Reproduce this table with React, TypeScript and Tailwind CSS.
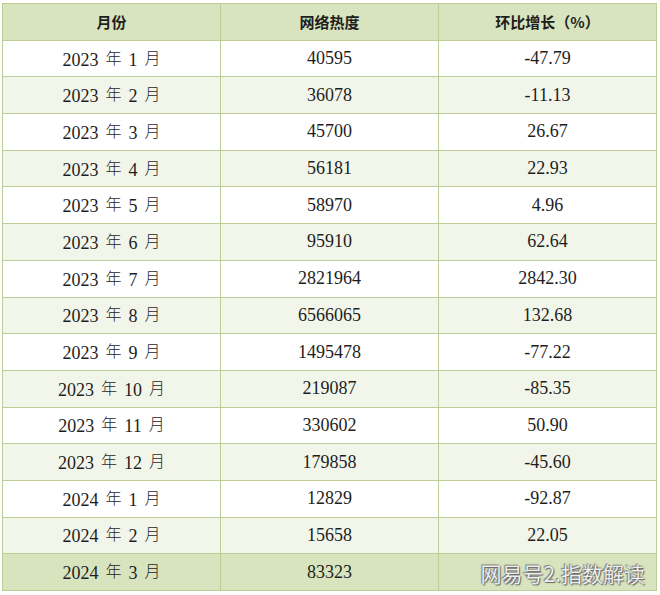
import React from "react";

const rows: [string, string, string, string][] = [
  ["2023", "1", "40595", "-47.79"],
  ["2023", "2", "36078", "-11.13"],
  ["2023", "3", "45700", "26.67"],
  ["2023", "4", "56181", "22.93"],
  ["2023", "5", "58970", "4.96"],
  ["2023", "6", "95910", "62.64"],
  ["2023", "7", "2821964", "2842.30"],
  ["2023", "8", "6566065", "132.68"],
  ["2023", "9", "1495478", "-77.22"],
  ["2023", "10", "219087", "-85.35"],
  ["2023", "11", "330602", "50.90"],
  ["2023", "12", "179858", "-45.60"],
  ["2024", "1", "12829", "-92.87"],
  ["2024", "2", "15658", "22.05"],
  ["2024", "3", "83323", ""],
];

const cell =
  "h-[36.7px] flex items-center justify-center border-r border-b border-[#bccd95] text-[18px]";

function bgFor(i: number) {
  if (i === rows.length - 1) return "bg-[#d8e4bd]";
  return i % 2 === 1 ? "bg-[#f2f6ea]" : "bg-white";
}

const cjk = "align-[2px] text-[16px] font-light font-['Noto_Sans_CJK_SC',sans-serif]";

export default function App() {
  return (
    <div className="w-[660px] h-[595px] bg-white pt-[3px] pl-[2px] overflow-hidden">
      <div className="w-[655px] grid grid-cols-[218px_218px_218px] border-l border-t border-[#bccd95] text-[#1e1e1e] font-['Liberation_Serif','Noto_Sans_CJK_SC',serif]">
        {["月份", "网络热度", "环比增长（%）"].map((h) => (
          <div
            key={h}
            className="h-[36.7px] flex items-center justify-center bg-[#d8e4bd] border-r border-b border-[#bccd95] text-[15px] font-bold font-['Noto_Sans_CJK_SC',sans-serif]"
          >
            {h}
          </div>
        ))}
        {rows.map(([y, m, v, c], i) => {
          const last = i === rows.length - 1;
          return (
            <React.Fragment key={i}>
              <div className={`${cell} ${bgFor(i)}`}>
                <span className="leading-none whitespace-pre">
                  {y}
                  <span className={`px-[7px] ${cjk}`}>年</span>
                  {m}
                  <span className={`pl-[7px] ${cjk}`}>月</span>
                </span>
              </div>
              <div className={`${cell} ${bgFor(i)}`}>{v}</div>
              {last ? (
                <div className={`h-[36.7px] flex items-center justify-end pr-[11px] pt-[2px] border-r border-b border-[#bccd95] ${bgFor(i)}`}>
                  <span className="text-[21px] leading-none text-white/90 font-['Noto_Sans_CJK_SC',sans-serif] [text-shadow:0_0_1px_#555,1px_1px_1px_#666,-1px_-1px_1px_#888]">
                    网易号2.指数解读
                  </span>
                </div>
              ) : (
                <div className={`${cell} ${bgFor(i)}`}>{c}</div>
              )}
            </React.Fragment>
          );
        })}
      </div>
    </div>
  );
}
